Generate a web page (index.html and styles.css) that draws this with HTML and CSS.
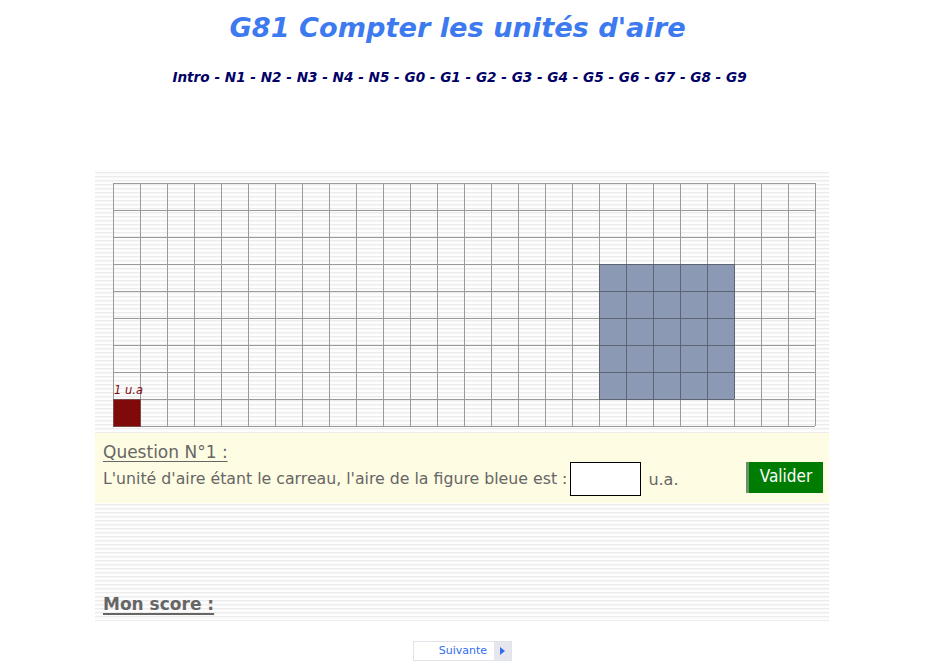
FILE: index.html
```html
<!DOCTYPE html>
<html lang="fr">
<head>
<meta charset="utf-8">
<title>G81 Compter les unités d'aire</title>
<link rel="stylesheet" href="styles.css">
</head>
<body>
<header class="head">
  <h1 class="title">G81 Compter les unités d'aire</h1>
  <nav class="nav">Intro - N1 - N2 - N3 - N4 - N5 - G0 - G1 - G2 - G3 - G4 - G5 - G6 - G7 - G8 - G9</nav>
</header>
<main class="panel">
  <div class="board">
    <svg class="grid" width="704" height="244" viewBox="0 0 704 244" xmlns="http://www.w3.org/2000/svg">
      <g id="lines" stroke="#9a9a9a" stroke-width="1" shape-rendering="crispEdges"></g>
      <rect x="486" y="81" width="135" height="135" fill="#8c99b4" shape-rendering="crispEdges"/>
      <g id="blines" stroke="#5d6472" stroke-width="1" shape-rendering="crispEdges"></g>
      <rect x="0.5" y="216.5" width="27" height="27" fill="#800a0a" stroke="#7a4a4a" stroke-width="1" shape-rendering="crispEdges"/>
    </svg>
    <span class="unit-label">1 u.a</span>
  </div>
  <section class="question">
    <div class="q-title">Question N°1 :</div>
    <div class="q-row">
      <span class="q-text">L'unité d'aire étant le carreau, l'aire de la figure bleue est :</span>
      <input class="answer" type="text">
      <span class="q-unit">u.a.</span>
      <button class="validate" type="button">Valider</button>
    </div>
  </section>
  <div class="score">Mon score :</div>
</main>
<footer class="foot">
  <button class="next" type="button"><span class="next-label">Suivante</span><span class="next-arrow"></span></button>
</footer>
<script>
(function(){
  var ns="http://www.w3.org/2000/svg";
  var g=document.getElementById("lines");
  for(var i=0;i<=26;i++){var l=document.createElementNS(ns,"line");var x=i*27+0.5;l.setAttribute("x1",x);l.setAttribute("x2",x);l.setAttribute("y1",0);l.setAttribute("y2",243);g.appendChild(l);}
  for(var j=0;j<=9;j++){var l2=document.createElementNS(ns,"line");var y=j*27+0.5;l2.setAttribute("x1",0);l2.setAttribute("x2",702);l2.setAttribute("y1",y);l2.setAttribute("y2",y);g.appendChild(l2);}
  var b=document.getElementById("blines");
  for(var k=0;k<=5;k++){
    var v=document.createElementNS(ns,"line");var vx=486+k*27+0.5;v.setAttribute("x1",vx);v.setAttribute("x2",vx);v.setAttribute("y1",81);v.setAttribute("y2",216);b.appendChild(v);
    var h=document.createElementNS(ns,"line");var hy=81+k*27+0.5;h.setAttribute("x1",486);h.setAttribute("x2",621);h.setAttribute("y1",hy);h.setAttribute("y2",hy);b.appendChild(h);
  }
})();
</script>
</body>
</html>
```
FILE: styles.css
```css
html, body {
  margin: 0;
  padding: 0;
  background: #ffffff;
}
body {
  width: 929px;
  font-family: "DejaVu Sans", Verdana, sans-serif;
}
.head {
  display: flex;
  flex-direction: column;
  align-items: center;
  padding-top: 10px;
}
.title {
  margin: 0;
  font-size: 27.2px;
  font-weight: bold;
  font-style: italic;
  color: #3d7af0;
  line-height: 36px;
  padding-right: 14px;
}
.nav {
  margin-top: 22px;
  font-size: 13.6px;
  font-weight: bold;
  font-style: italic;
  color: #000066;
  line-height: 18px;
  padding-right: 10px;
}
.panel {
  margin: 86px 0 0 95px;
  width: 734px;
  height: 449px;
  box-sizing: border-box;
  padding-top: 11px;
  background: repeating-linear-gradient(180deg, #ececec 0, #ececec 1px, #f7f7f7 1px, #f7f7f7 2px, #fdfdfd 2px, #fdfdfd 4px);
  display: flex;
  flex-direction: column;
}
.board {
  position: relative;
  margin-left: 18px;
  width: 704px;
  height: 244px;
}
.grid {
  display: block;
}
.unit-label {
  position: absolute;
  left: 1px;
  top: 201px;
  font-size: 11.5px;
  font-style: italic;
  color: #800a0a;
  line-height: 13px;
}
.question {
  margin-top: 6px;
  height: 70px;
  box-sizing: border-box;
  background: #fefce2;
  padding: 9px 6px 0 8px;
  color: #666666;
}
.q-title {
  font-size: 17px;
  line-height: 20px;
  text-decoration: underline;
  text-underline-offset: 3px;
  text-decoration-thickness: 1px;
}
.q-row {
  display: flex;
  align-items: center;
  margin-top: 0;
}
.q-text {
  font-size: 15.75px;
  line-height: 20px;
}
.answer {
  margin-left: 3px;
  width: 71px;
  height: 34px;
  box-sizing: border-box;
  border: 1px solid #000;
  background: #fff;
  padding: 0;
}
.q-unit {
  margin-left: 7px;
  font-size: 16px;
}
.validate {
  margin-left: auto;
  margin-bottom: 3px;
  width: 77px;
  height: 31px;
  box-sizing: border-box;
  border: none;
  border-left: 3px solid #6a8f6a;
  background: #007c00;
  color: #ffffff;
  font-family: "DejaVu Sans Condensed", "DejaVu Sans", Verdana, sans-serif;
  font-size: 17px;
  padding: 0 0 3px 0;
}
.score {
  margin-top: auto;
  margin-bottom: 7px;
  margin-left: 8px;
  font-size: 17px;
  font-weight: bold;
  color: #666666;
  text-decoration: underline;
  text-decoration-thickness: 2px;
  text-underline-offset: 3px;
}
.foot {
  display: flex;
  justify-content: center;
  padding-top: 20px;
  padding-right: 4px;
}
.next {
  display: flex;
  align-items: stretch;
  width: 99px;
  height: 20px;
  padding: 0;
  border: 1px solid #e2e2ea;
  background: #ffffff;
  box-sizing: border-box;
}
.next-label {
  flex: 1;
  font-family: "DejaVu Sans", Verdana, sans-serif;
  font-size: 11px;
  color: #2f6ef2;
  text-align: right;
  padding-right: 7px;
  line-height: 18px;
}
.next-arrow {
  width: 17px;
  background: #e6e6ee;
  position: relative;
}
.next-arrow::after {
  content: "";
  position: absolute;
  left: 6px;
  top: 5px;
  border-left: 5px solid #2f6ef2;
  border-top: 4px solid transparent;
  border-bottom: 4px solid transparent;
}
```
